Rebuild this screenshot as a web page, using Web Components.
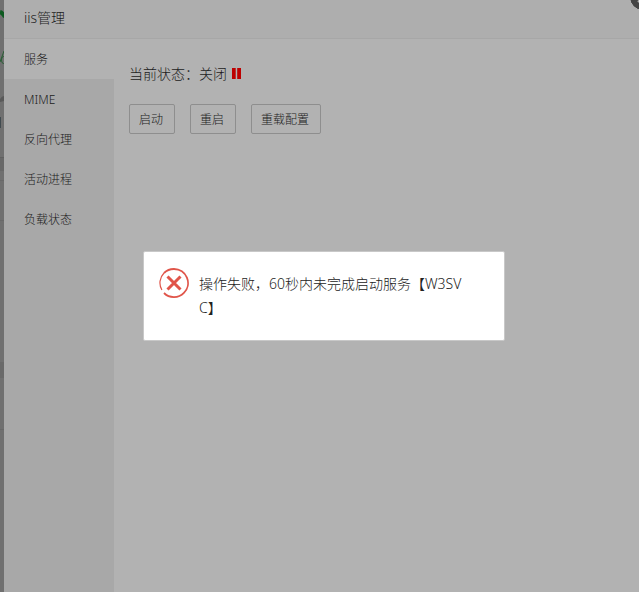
<!DOCTYPE html>
<html lang="zh-CN">
<head>
<meta charset="utf-8">
<title>iis管理</title>
<style>
html, body { height: 100%; }
body { margin: 0; overflow: hidden; background: #707070; color: #1c1c1c; font: 300 12px/20px "Noto Sans", "Noto Sans CJK SC", sans-serif; }
</style>
</head>
<body>
<iis-app></iis-app>
<script>
const define = (name, html) => customElements.define(name, class extends HTMLElement {
  constructor() {
    super();
    this.attachShadow({ mode: "open" }).innerHTML = html;
  }
});

define("page-edge", `
<style>
:host { display: block; background: #707070; overflow: hidden; }
svg { display: block; }
</style>
<svg width="4" height="592" viewBox="0 0 4 592" aria-hidden="true">
  <path d="M0 12Q3 13 5 17" fill="none" stroke="#0d5a20" stroke-width="4"/>
  <path d="M0 62L4 51" stroke="#2a5f36" stroke-width="1"/>
  <ellipse cx="3.5" cy="60" rx="2" ry="3.5" fill="none" stroke="#2a5f36"/>
  <path d="M0 102V99Q2 96 4 96V101Z" fill="#595959"/>
  <path d="M0 117H1V128H0Z" fill="#414b50"/>
  <path d="M0 157H4V171H0Z" fill="#686868"/>
  <path d="M0 157.500H4" stroke="#606060"/>
  <path d="M0 180.500H4M0 220.500H4M0 429.500H4" stroke="#696969"/>
  <path d="M0 362H4V378H0Z" fill="#696969"/>
</svg>`);

define("close-button", `
<style>
:host { display: block; }
button { display: block; width: 28px; height: 28px; padding: 0; border: 1px solid #bcbcbc; border-radius: 50%; background: #454545; }
svg { display: block; }
</style>
<button type="button" aria-label="关闭窗口"><svg width="26" height="26" viewBox="0 0 26 26"><path d="M8 8L18 18M18 8L8 18" stroke="#b2b2b2" stroke-width="2"/></svg></button>`);

define("nav-item", `
<style>
:host { display: block; }
button { display: block; width: 100%; height: 40px; padding: 2px 20px 0; border: 0; background: transparent; color: inherit; font: inherit; text-align: left; }
:host([active]) button { background: #b2b2b2; }
</style>
<button type="button"><slot></slot></button>`);

define("action-button", `
<style>
:host { display: block; }
button { display: block; height: 30px; padding: 1px 11px 0 9px; border: 1px solid #8e8e8e; border-radius: 2px; background: transparent; color: inherit; font: inherit; }
</style>
<button type="button"><slot></slot></button>`);

define("service-status", `
<style>
:host { display: flex; align-items: center; gap: 5px; font-size: 14px; line-height: 20px; }
svg { display: block; }
</style>
<span><slot></slot></span>
<svg width="9" height="12" viewBox="0 0 9 12" aria-hidden="true"><path d="M0 0H3.700V11H0ZM5.200 0H9V11H5.200Z" fill="#bd0000"/></svg>`);

define("error-message", `
<style>
:host { display: flex; box-sizing: border-box; width: 362px; max-width: 90%; min-height: 90px; padding: 16px 30px 20px 15px; gap: 10px; border: 1px solid #c8c8c8; border-radius: 2px; background: #fff; color: #222; font-size: 14px; line-height: 24px; }
svg { display: block; flex: none; }
p { margin: 4px 0 0; word-break: break-all; }
</style>
<svg width="30" height="30" viewBox="0 0 30 30" aria-hidden="true">
  <g fill="none" stroke="#e0554a">
    <path d="M5 25A14 14 0 0 0 24.900 24.900A14 14 0 0 0 15 1A14 14 0 0 0 5 5" stroke-width="1.800"/>
    <path d="M5 5A14 14 0 0 0 2.900 22" stroke-width="1.200"/>
    <path d="M8.500 8.500L21.500 21.500M21.500 8.500L8.500 21.500" stroke-width="3"/>
  </g>
</svg>
<p><slot></slot></p>`);

define("iis-app", `
<style>
:host { display: grid; grid-template-columns: 4px minmax(0, 1fr); height: 100%; position: relative; overflow: hidden; }
.window { display: grid; grid-template-rows: 39px minmax(0, 1fr); background: #b2b2b2; }
header { box-sizing: border-box; padding: 8px 20px; border-bottom: 1px solid #a7a7a7; background: #aeaeae; }
h1 { margin: 0; font-size: 14px; line-height: 20px; font-weight: inherit; }
.body { display: grid; grid-template-columns: 110px minmax(0, 1fr); }
nav { background: #a8a8a8; }
main { padding: 25px 15px; }
.actions { display: flex; gap: 15px; margin-top: 20px; }
close-button { position: absolute; top: -17px; right: -18px; }
.overlay { position: absolute; inset: 0; display: flex; align-items: center; justify-content: center; padding-left: 9px; }
</style>
<page-edge></page-edge>
<div class="window">
  <header><h1>iis管理</h1></header>
  <div class="body">
    <nav>
      <nav-item active>服务</nav-item>
      <nav-item>MIME</nav-item>
      <nav-item>反向代理</nav-item>
      <nav-item>活动进程</nav-item>
      <nav-item>负载状态</nav-item>
    </nav>
    <main>
      <service-status>当前状态：关闭</service-status>
      <div class="actions">
        <action-button>启动</action-button>
        <action-button>重启</action-button>
        <action-button>重载配置</action-button>
      </div>
    </main>
  </div>
</div>
<close-button></close-button>
<div class="overlay"><error-message role="alert">操作失败，60秒内未完成启动服务【W3SVC】</error-message></div>`);
</script>
</body>
</html>
